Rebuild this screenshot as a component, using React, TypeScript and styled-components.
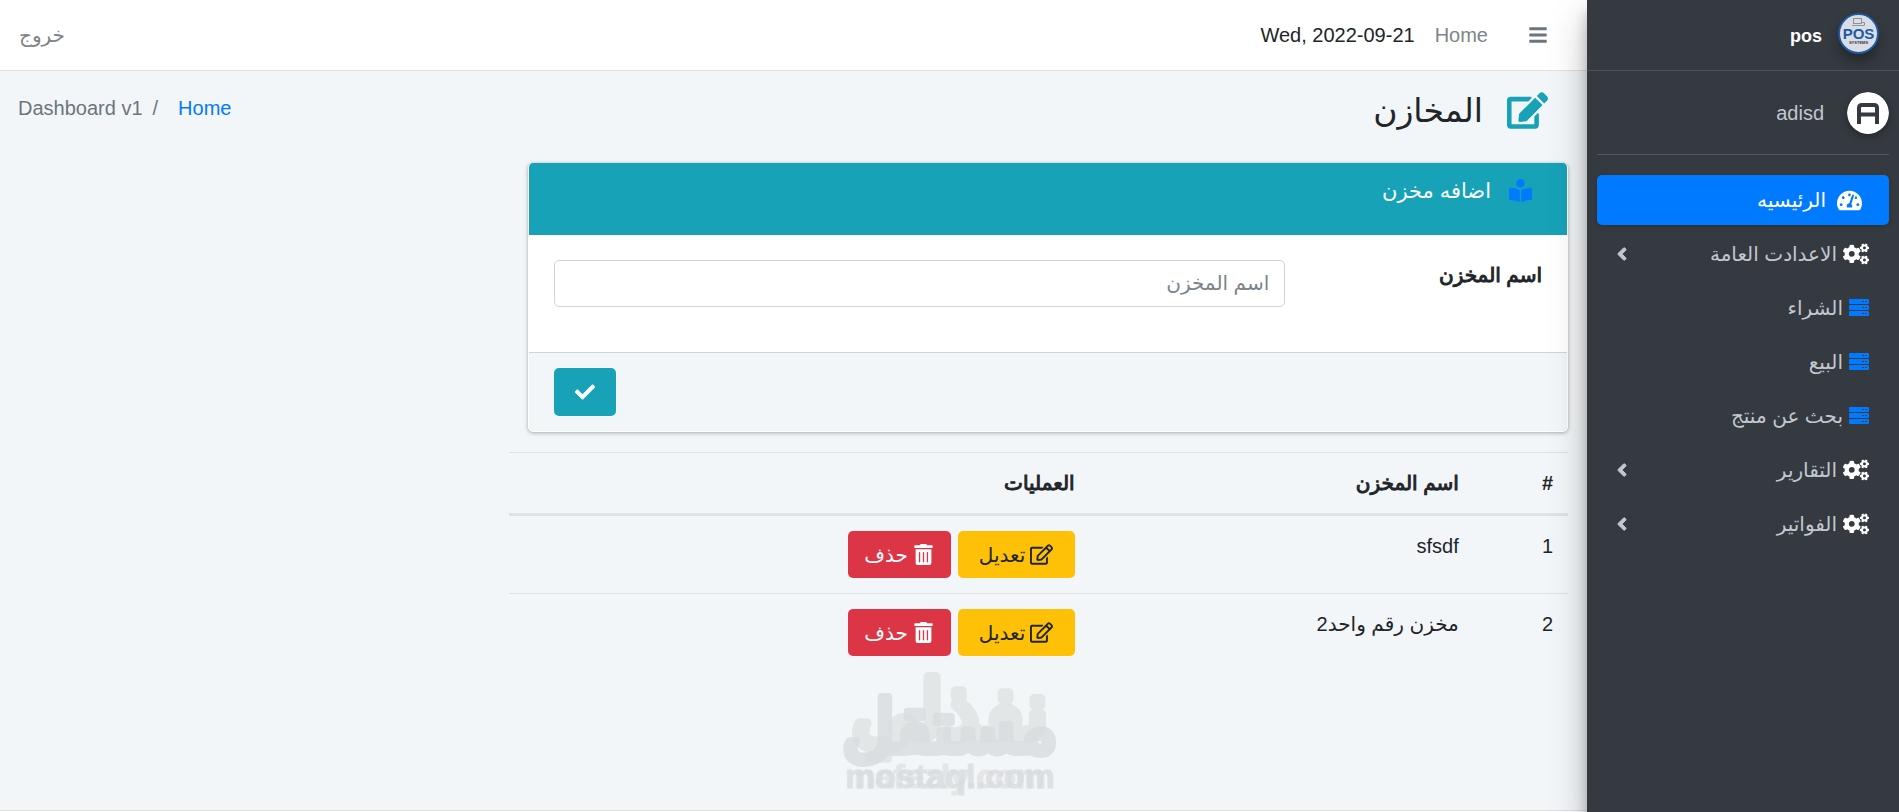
import React from "react";
import styled, { createGlobalStyle, css } from "styled-components";
import {
  FaAngleLeft,
  FaBars,
  FaBookReader,
  FaCheck,
  FaCogs,
  FaEdit,
  FaRegEdit,
  FaTachometerAlt,
  FaTrashAlt,
} from "react-icons/fa";

const GlobalStyle = createGlobalStyle`
  *, *::before, *::after { box-sizing: border-box; }
  body {
    margin: 0;
    background: #f3f6f8;
    color: #212529;
    font-family: "Liberation Sans", "DejaVu Sans", sans-serif;
    font-size: 20px;
    line-height: 30px;
  }
  svg { display: block; flex: none; }
`;

/* semi-bold weight that keeps the advance widths of the regular face */
const semiBold = css`
  font-weight: 400;
  -webkit-text-stroke: 1px currentColor;
`;

const Shell = styled.div`
  position: relative;
  display: flex;
  min-height: 100vh;
`;

/* ---------- sidebar ---------- */

const Sidebar = styled.aside`
  position: relative;
  z-index: 2;
  flex: 0 0 312px;
  background: #343a40;
  color: #c2c7d0;
  box-shadow: 0 18px 35px rgba(0, 0, 0, 0.25), 0 12px 12px rgba(0, 0, 0, 0.22);
`;

const Brand = styled.a`
  display: flex;
  align-items: center;
  gap: 16px;
  height: 71px;
  padding: 0 20px 4px;
  border-bottom: 1px solid #4b545c;
  color: #fff;
  text-decoration: none;

  svg {
    border-radius: 50%;
    box-shadow: 0 8px 12px rgba(0, 0, 0, 0.3);
  }
`;

const BrandName = styled.span`
  padding-top: 6px;
  font-size: 18px;
  font-weight: 700;
`;

const SidebarBody = styled.div`
  padding: 0 10px;
`;

const UserPanel = styled.div`
  display: flex;
  align-items: center;
  gap: 23px;
  height: 84px;
  margin-bottom: 20px;
  border-bottom: 1px solid #4f5962;

  svg {
    border-radius: 50%;
    box-shadow: 0 3px 7px rgba(0, 0, 0, 0.3);
  }
`;

const UserLink = styled.a`
  color: #c2c7d0;
  text-decoration: none;
`;

const Menu = styled.ul`
  display: flex;
  flex-direction: column;
  gap: 4px;
  margin: 0;
  padding: 0;
  list-style: none;
`;

const MenuLink = styled.a<{ $active?: boolean }>`
  display: flex;
  align-items: center;
  gap: ${(p) => (p.$active ? 3 : 6)}px;
  height: 50px;
  padding: 0 20px;
  border-radius: 5px;
  color: #c2c7d0;
  text-decoration: none;
  ${(p) =>
    p.$active &&
    css`
      background: #007bff;
      color: #fff;
      box-shadow: 0 1px 4px rgba(0, 0, 0, 0.2);
    `}
`;

const MenuIcon = styled.span<{ $color: string; $wide?: boolean }>`
  display: flex;
  justify-content: center;
  width: ${(p) => (p.$wide ? "40px" : "auto")};
  color: ${(p) => p.$color};
`;

const MenuArrow = styled(FaAngleLeft)`
  width: 10px;
  margin-inline-start: auto;
  stroke-width: 24;
`;

/* ---------- top bar ---------- */

const Main = styled.div`
  display: flex;
  flex: 1;
  flex-direction: column;
  min-width: 0;
`;

const TopBar = styled.nav`
  display: flex;
  align-items: center;
  height: 71px;
  padding: 0 19px;
  background: #fff;
  border-bottom: 1px solid #dee2e6;
`;

const IconButton = styled.button`
  display: flex;
  padding: 10px 20px;
  border: 0;
  background: none;
  color: #6c757d;
  font-size: 20px;
`;

const TopLink = styled.a`
  padding: 0 20px;
  color: #808488;
  text-decoration: none;
`;

const LogoutLink = styled(TopLink)`
  margin-inline-start: auto;
  padding: 0;
`;

/* ---------- page header ---------- */

const PageHeader = styled.header`
  display: flex;
  justify-content: space-between;
  align-items: flex-start;
  height: 92px;
  padding: 18px 39px 0 18px;
`;

const PageTitle = styled.h1`
  display: flex;
  align-items: center;
  gap: 24px;
  margin: 0;
  font-size: 33px;
  font-weight: 400;
  line-height: 43px;

  svg {
    color: #17a2b8;
  }
`;

const Breadcrumb = styled.ol`
  display: flex;
  gap: 10px;
  margin: 0;
  padding: 4px 0 0;
  list-style: none;
  color: #6c757d;

  a {
    margin-inline-end: 10px;
    color: #007bff;
    text-decoration: none;
  }
`;

/* ---------- content ---------- */

const Content = styled.main`
  flex: 1;
  width: 66.7%;
  margin-inline-start: 19px;
`;

const Card = styled.form`
  margin: 0;
  margin-inline-end: 19px;
  margin-bottom: 20px;
  border: 1px solid #fff;
  border-top: 0;
  border-radius: 5px;
  background: #fff;
  box-shadow: 0 0 1px rgba(0, 0, 0, 0.2), 0 1px 4px rgba(0, 0, 0, 0.3);
  overflow: hidden;
`;

const CardHeader = styled.div`
  display: flex;
  align-items: flex-start;
  gap: 18px;
  height: 72px;
  padding: 13px 35px;
  background: #17a2b8;
  color: #fff;

  svg {
    margin-top: 3px;
    color: #007bff;
  }
`;

const CardTitle = styled.h2`
  margin: 0;
  font-size: 21px;
  font-weight: 400;
  line-height: 30px;
`;

const CardBody = styled.div`
  display: grid;
  grid-template-columns: 26fr 74fr;
  align-items: start;
  padding: 25px 25px 45px;
`;

const FieldLabel = styled.label`
  ${semiBold}
`;

const TextInput = styled.input`
  width: 100%;
  height: 47px;
  padding: 0 15px;
  border: 1px solid #ced4da;
  border-radius: 5px;
  background: #fff;
  color: #495057;
  font: inherit;

  &::placeholder {
    color: #7b848c;
    opacity: 1;
  }
`;

const CardFooter = styled.div`
  display: flex;
  justify-content: flex-end;
  padding: 15px 25px;
  border-top: 1px solid #ced4da;
  background: #f3f6f8;
`;

const Button = styled.button<{ $tone: "info" | "warning" | "danger" }>`
  display: inline-flex;
  align-items: center;
  justify-content: center;
  gap: 5px;
  width: ${(p) => ({ info: 62, warning: 117, danger: 103 })[p.$tone]}px;
  height: 47px;
  padding: 0;
  border: 0;
  border-radius: 5px;
  font: inherit;
  color: ${(p) => (p.$tone === "warning" ? "#212529" : "#fff")};
  background: ${(p) =>
    ({ info: "#17a2b8", warning: "#ffc107", danger: "#dc3545" })[p.$tone]};
`;

const SubmitButton = styled(Button)`
  height: 48px;
`;

const Table = styled.table`
  width: 100%;
  border-collapse: separate;
  border-spacing: 0;
  table-layout: fixed;

  th,
  td {
    padding: 15px;
    text-align: start;
    vertical-align: top;
  }
  th {
    border-top: 1px solid #dee2e6;
    border-bottom: 3px solid #dee2e6;
  }
  tbody tr + tr td {
    border-top: 1px solid #dee2e6;
  }
`;

const HeadCell = styled.th<{ $width?: string }>`
  width: ${(p) => p.$width ?? "auto"};
  ${semiBold}
`;

const NumberHeadCell = styled.th`
  width: 8.9%;
  font-weight: 700;
`;

const Actions = styled.div`
  display: flex;
  gap: 7px;
`;

const Footer = styled.footer`
  height: 2px;
  border-top: 1px solid #dee2e6;
  background: #fff;
`;

const Watermark = styled.svg`
  position: absolute;
  bottom: 0;
  left: 50%;
  margin-left: -160px;
  pointer-events: none;
`;

/* ---------- drawings ---------- */

const PosLogo = () => (
  <svg width="41" height="41" viewBox="0 0 41 41" aria-hidden="true">
    <circle cx="20.500" cy="20.500" r="19.500" fill="#dadde3" stroke="#1b5aa8" strokeWidth="2" />
    <g fill="none" stroke="#8d939c" strokeWidth="1">
      <rect x="15.500" y="5.500" width="8" height="5" />
      <path d="M14 12.500h12M24 9.500h2.500v3" />
    </g>
    <text x="20.500" y="26" textAnchor="middle" direction="ltr" fontSize="15" fontWeight="700" fill="#1b5aa8">
      POS
    </text>
    <text x="20.500" y="31" textAnchor="middle" direction="ltr" fontSize="4" fontWeight="700" fill="#343a40">
      SYSTEMS
    </text>
  </svg>
);

const UserAvatar = () => (
  <svg width="42" height="42" viewBox="0 0 42 42" aria-hidden="true">
    <circle cx="21" cy="21" r="21" fill="#fff" />
    <path d="M12 32V16q0-3 3-3h12q3 0 3 3v16" fill="none" stroke="#343a40" strokeWidth="4" />
    <path d="M12 22.500h18" fill="none" stroke="#343a40" strokeWidth="4" />
  </svg>
);

const ServerIcon = () => (
  <svg width="20" height="18" viewBox="0 0 20 18" aria-hidden="true">
    {[0, 6, 12].map((y) => (
      <g key={y}>
        <rect y={y} width="20" height="5" rx="1" fill="currentColor" />
        <rect x="13" y={y + 2} width="2" height="1" fill="#343a40" />
        <rect x="16" y={y + 2} width="2" height="1" fill="#343a40" />
      </g>
    ))}
  </svg>
);

const menu = [
  { label: "الاعدادت العامة", group: true },
  { label: "الشراء", group: false },
  { label: "البيع", group: false },
  { label: "بحث عن منتج", group: false },
  { label: "التقارير", group: true },
  { label: "الفواتير", group: true },
];

const stores = [
  { id: 1, name: "sfsdf" },
  { id: 2, name: "مخزن رقم واحد2" },
];

export default function App() {
  return (
    <Shell dir="rtl" lang="ar">
      <GlobalStyle />
      <Sidebar>
        <Brand href="#">
          <PosLogo />
          <BrandName>pos</BrandName>
        </Brand>
        <SidebarBody>
          <UserPanel>
            <UserAvatar />
            <UserLink href="#">adisd</UserLink>
          </UserPanel>
          <Menu>
            <li>
              <MenuLink href="#" $active>
                <MenuIcon $color="#fff" $wide>
                  <FaTachometerAlt size={25} />
                </MenuIcon>
                الرئيسيه
              </MenuLink>
            </li>
            {menu.map((item) => (
              <li key={item.label}>
                <MenuLink href="#">
                  <MenuIcon $color={item.group ? "#fff" : "#007bff"}>
                    {item.group ? <FaCogs size={26} /> : <ServerIcon />}
                  </MenuIcon>
                  {item.label}
                  {item.group && <MenuArrow size={20} />}
                </MenuLink>
              </li>
            ))}
          </Menu>
        </SidebarBody>
      </Sidebar>

      <Main>
        <TopBar>
          <IconButton type="button" aria-label="القائمة">
            <FaBars />
          </IconButton>
          <TopLink href="#">Home</TopLink>
          <span dir="ltr">Wed, 2022-09-21</span>
          <LogoutLink href="#">خروج</LogoutLink>
        </TopBar>

        <PageHeader>
          <PageTitle>
            <FaEdit size={41} />
            المخازن
          </PageTitle>
          <Breadcrumb>
            <li>
              <a href="#">Home</a>
            </li>
            <li aria-hidden="true">/</li>
            <li>Dashboard v1</li>
          </Breadcrumb>
        </PageHeader>

        <Content>
          <Card onSubmit={(e) => e.preventDefault()}>
            <CardHeader>
              <FaBookReader size={23} />
              <CardTitle>اضافه مخزن</CardTitle>
            </CardHeader>
            <CardBody>
              <FieldLabel htmlFor="store-name">اسم المخزن</FieldLabel>
              <TextInput id="store-name" type="text" placeholder="اسم المخزن" />
            </CardBody>
            <CardFooter>
              <SubmitButton type="submit" $tone="info" aria-label="حفظ">
                <FaCheck />
              </SubmitButton>
            </CardFooter>
          </Card>

          <Table>
            <thead>
              <tr>
                <NumberHeadCell>#</NumberHeadCell>
                <HeadCell $width="36.3%">اسم المخزن</HeadCell>
                <HeadCell>العمليات</HeadCell>
              </tr>
            </thead>
            <tbody>
              {stores.map((store) => (
                <tr key={store.id}>
                  <td>{store.id}</td>
                  <td>{store.name}</td>
                  <td>
                    <Actions>
                      <Button type="button" $tone="warning">
                        <FaRegEdit size={23} />
                        تعديل
                      </Button>
                      <Button type="button" $tone="danger">
                        <FaTrashAlt size={21} />
                        حذف
                      </Button>
                    </Actions>
                  </td>
                </tr>
              ))}
            </tbody>
          </Table>
        </Content>
        <Footer />
      </Main>

      <Watermark width="320" height="190" viewBox="0 -40 320 190" aria-hidden="true">
        <g textAnchor="middle" strokeLinejoin="round">
          <g fill="#e3e6e7" stroke="#e3e6e7">
            <text x="160" y="76" fontSize="80" strokeWidth="10">
              نفذلي
            </text>
            <text x="160" y="126" fontSize="34" fontWeight="700" direction="ltr" strokeWidth="1">
              nafezly.com
            </text>
          </g>
          <g fill="#d9dde0" stroke="#d9dde0" opacity="0.8">
            <text x="160" y="90" fontSize="72" strokeWidth="8">
              مستقل
            </text>
            <text x="160" y="126" fontSize="34" fontWeight="700" direction="ltr" strokeWidth="1">
              mostaql.com
            </text>
          </g>
        </g>
      </Watermark>
    </Shell>
  );
}
